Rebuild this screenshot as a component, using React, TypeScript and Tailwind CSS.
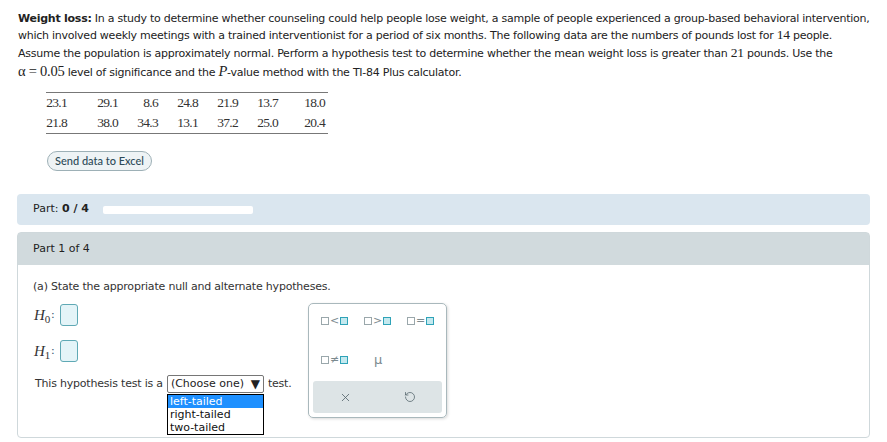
import { RotateCcw, X } from 'lucide-react';

const rows = [
  ['23.1', '29.1', '8.6', '24.8', '21.9', '13.7', '18.0'],
  ['21.8', '38.0', '34.3', '13.1', '37.2', '25.0', '20.4'],
];
const colW = ['w-[24px]', 'w-[51px]', 'w-[40px]', 'w-[40px]', 'w-[40px]', 'w-[40px]', 'w-[47px]'];

const serif = "font-['Liberation_Serif',serif]";

function Sq({ filled }: { filled?: boolean }) {
  return (
    <span
      className={
        filled
          ? 'inline-block h-[8px] w-[8px] border border-[#2fa3b8] bg-[#c4e9ef]'
          : 'inline-block h-[8px] w-[8px] border border-[#9aa7ab] bg-white'
      }
    />
  );
}

function Rel({ op }: { op: string }) {
  return (
    <span className="flex items-center gap-[1px] text-[11px] leading-none text-[#7b8a8f]">
      <Sq />
      <span className="font-['DejaVu_Sans',sans-serif]">{op}</span>
      <Sq filled />
    </span>
  );
}

function HypRow({ sub }: { sub: string }) {
  return (
    <div className="flex h-[22px] items-center">
      <span className={`${serif} w-[16px] text-[15px] italic leading-none text-[#333]`}>
        H<span className="relative top-[3px] text-[11px] not-italic">{sub}</span>
      </span>
      <span className="ml-[1px] text-[#2a4a6a]">:</span>
      <span className="ml-[5px] h-[22px] w-[18px] rounded-[3px] border border-[#5fa9b5] bg-[#e4f4f8]" />
    </div>
  );
}

export default function App() {
  return (
    <div className="min-h-[442px] bg-white px-[17px] pt-[11px] font-['DejaVu_Sans',sans-serif] text-[11px] text-[#222]">
      <div className="whitespace-nowrap pl-[1px] tracking-[-0.25px]">
        <p className="leading-[16px]">
          <b>Weight loss:</b> In a study to determine whether counseling could help people lose weight, a sample of
          people experienced a group-based behavioral intervention,
          <br />
          which involved weekly meetings with a trained interventionist for a period of six months. The following data
          are the numbers of pounds lost for <span className={`${serif} text-[13.5px]`}>14</span> people.
          <br />
          <span className="inline-block pt-[1px]">
            Assume the population is approximately normal. Perform a hypothesis test to determine whether the mean
            weight loss is greater than <span className={`${serif} text-[13.5px]`}>21</span> pounds. Use the
          </span>
        </p>
        <p className="leading-[18px]">
          <span className={`${serif} text-[14.5px]`}>α = 0.05</span> level of significance and the{' '}
          <span className={`${serif} text-[14.5px] italic`}>P</span>-value method with the TI-84 Plus calculator.
        </p>
      </div>

      <div className={`ml-[29px] mt-[10px] w-[282px] border-y border-[#777] ${serif} text-[13.5px] tracking-[-0.7px] text-[#333]`}>
        {rows.map((r, i) => (
          <div key={i} className="flex h-[20px] items-center">
            {r.map((v, j) => (
              <div key={j} className={`${colW[j]} pr-[3px] text-right`}>
                {v}
              </div>
            ))}
          </div>
        ))}
      </div>

      <div className="ml-[30px] mt-[17px]">
        <button
          type="button"
          className="h-[20px] w-[105px] rounded-full border border-[#9db0b6] bg-[#eef3f5] font-['Lato',sans-serif] text-[11px] font-medium text-[#2c4a58]"
        >
          Send data to Excel
        </button>
      </div>

      <div className="mt-[23px] flex h-[31px] items-center gap-[14px] rounded-[4px] bg-[#dae6ef] px-[16px] text-[11px] text-[#222]">
        <span>
          Part: <b>0 / 4</b>
        </span>
        <div className="h-[8px] w-[150px] rounded-[2px] bg-white" />
      </div>

      <div className="mt-[7px] h-[206px] rounded-[4px] border border-[#cfd8db]">
        <div className="flex h-[32px] items-center bg-[#d1dadd] px-[15px] text-[11px] text-[#222]">Part 1 of 4</div>
        <div className="px-[15px] pt-[15px] text-[11px] tracking-[-0.2px] text-[#333]">
          <div className="leading-[14px]">(a) State the appropriate null and alternate hypotheses.</div>
          <div className="mt-[9px] flex items-start">
            <div className="w-[275px] pt-[1px]">
              <div className="flex flex-col gap-[14px] pl-[1px]">
                <HypRow sub="0" />
                <HypRow sub="1" />
              </div>
              <div className="mt-[13px] flex items-center gap-[4px] pl-[2px]">
                <span>This hypothesis test is a</span>
                <div className="relative">
                  <div className="flex h-[18px] w-[97px] items-center justify-between rounded-[2px] border border-[#767676] px-[3px] text-[11px] tracking-normal text-[#222]">
                    <span>(Choose one)</span>
                    <span className="text-[12px] leading-none">▼</span>
                  </div>
                  <div className="absolute left-0 top-[19px] w-[97px] border border-black bg-white text-[11px] leading-[13px] tracking-normal text-[#111]">
                    <div className="bg-[#1e90ff] px-[2px] text-white">left-tailed</div>
                    <div className="px-[2px]">right-tailed</div>
                    <div className="px-[2px]">two-tailed</div>
                  </div>
                </div>
                <span>test.</span>
              </div>
            </div>
            <div className="flex h-[115px] w-[139px] flex-col rounded-[5px] border border-[#a9b8bc] px-[4px] pb-[4px] shadow-[1px_1px_3px_rgba(0,0,0,0.15)]">
              <div className="mt-[11px] flex justify-between px-[8px]">
                <Rel op="<" />
                <Rel op=">" />
                <Rel op="=" />
              </div>
              <div className="mt-[27px] flex items-center gap-[26px] px-[8px]">
                <Rel op="≠" />
                <span className="text-[13px] leading-none text-[#7b8a8f]">μ</span>
              </div>
              <div className="mt-auto flex h-[32px] items-center justify-around rounded-[3px] bg-[#dde4e6] text-[#52636a]">
                <X size={13} strokeWidth={1.5} />
                <RotateCcw size={12} strokeWidth={1.5} />
              </div>
            </div>
          </div>
        </div>
      </div>
    </div>
  );
}
